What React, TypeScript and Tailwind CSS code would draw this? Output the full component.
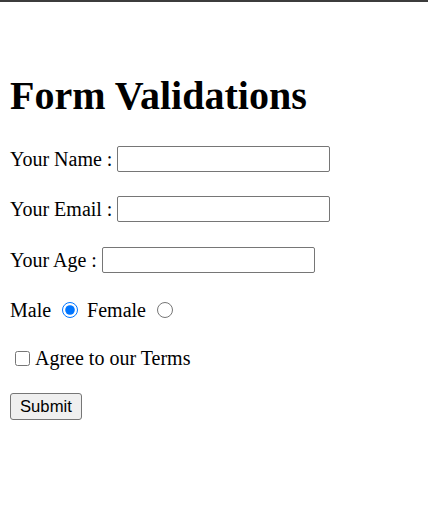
import React from "react";

const serif = "font-['Liberation_Serif','Times_New_Roman',serif]";

function Field({ label }: { label: string }) {
  return (
    <div className="flex h-[26px] items-center">
      <span className="text-[20px] leading-[23px] text-black">{label}</span>
      <input
        type="text"
        className="ml-[5px] h-[26px] w-[213px] rounded-[2px] border border-[#767676] bg-white px-[2px] outline-none"
      />
    </div>
  );
}

export default function App() {
  return (
    <div className={`min-h-[510px] w-full bg-white ${serif}`}>
      <div className="h-[2px] w-full bg-[#3c3c3c]" />
      <div className="flex flex-col pl-[10px]">
        <h1 className="mt-[71px] text-[40px] font-bold leading-[46px] text-black">
          Form Validations
        </h1>
        <div className="mt-[27px] flex flex-col">
          <Field label="Your Name :" />
          <div className="mt-[24px]">
            <Field label="Your Email :" />
          </div>
          <div className="mt-[25px]">
            <Field label="Your Age :" />
          </div>
          <div className="mt-[24px] flex h-[26px] items-center text-[20px] leading-[23px] text-black">
            <span>Male</span>
            <input
              type="radio"
              name="gender"
              defaultChecked
              className="ml-[11px] h-4 w-4 accent-[#0075ff]"
            />
            <span className="ml-[9px]">Female</span>
            <input type="radio" name="gender" className="ml-[11px] h-4 w-4" />
          </div>
          <div className="mt-[22px] flex h-[26px] items-center text-[20px] leading-[23px] text-black">
            <input type="checkbox" className="ml-[5px] h-[15px] w-[15px]" />
            <span className="ml-[5px]">Agree to our Terms</span>
          </div>
          <div className="mt-[22px]">
            <button
              type="submit"
              className="h-[27px] rounded-[3px] border border-[#767676] bg-[#efefef] px-[9px] font-['Liberation_Sans',Arial,sans-serif] text-[16.67px] leading-[20px] text-black"
            >
              Submit
            </button>
          </div>
        </div>
      </div>
    </div>
  );
}
